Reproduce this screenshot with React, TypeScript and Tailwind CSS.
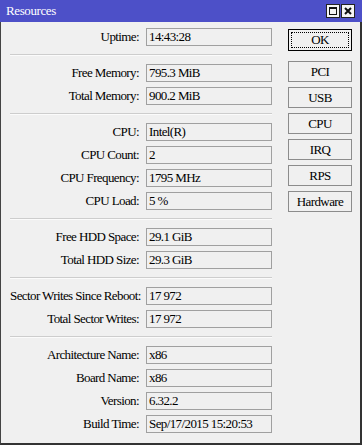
import { ReactNode } from 'react';

type Row = { label: string; value: string };

const groups: Row[][] = [
  [{ label: 'Uptime:', value: '14:43:28' }],
  [
    { label: 'Free Memory:', value: '795.3 MiB' },
    { label: 'Total Memory:', value: '900.2 MiB' },
  ],
  [
    { label: 'CPU:', value: 'Intel(R)' },
    { label: 'CPU Count:', value: '2' },
    { label: 'CPU Frequency:', value: '1795 MHz' },
    { label: 'CPU Load:', value: '5 %' },
  ],
  [
    { label: 'Free HDD Space:', value: '29.1 GiB' },
    { label: 'Total HDD Size:', value: '29.3 GiB' },
  ],
  [
    { label: 'Sector Writes Since Reboot:', value: '17 972' },
    { label: 'Total Sector Writes:', value: '17 972' },
  ],
  [
    { label: 'Architecture Name:', value: 'x86' },
    { label: 'Board Name:', value: 'x86' },
    { label: 'Version:', value: '6.32.2' },
    { label: 'Build Time:', value: 'Sep/17/2015 15:20:53' },
  ],
];

const buttons = ['PCI', 'USB', 'CPU', 'IRQ', 'RPS', 'Hardware'];

const Field = ({ label, value }: Row) => (
  <div className="flex h-[18px] items-center">
    <span className="w-[129px] whitespace-nowrap text-right">{label}</span>
    <div className="ml-[7px] flex h-[18px] w-[126px] items-center border border-[#a0a0a0] bg-[#f0f0f0] pl-[2px]">
      {value}
    </div>
  </div>
);

const Btn = ({ children }: { children: ReactNode }) => (
  <button className="flex h-[21px] w-[64px] items-center justify-center border border-[#8c8c8c] bg-[#f0f0f0] leading-none">
    {children}
  </button>
);

const TitleButton = ({ children }: { children: ReactNode }) => (
  <div className="flex h-[14px] w-[14px] items-center justify-center border border-[#222] bg-[#f4f4f4]">
    {children}
  </div>
);

const App = () => {
  return (
    <div className="flex h-[445px] w-[362px] flex-col bg-[#f0f0f0] font-['Liberation_Serif',serif] text-[13px] tracking-[-0.6px] text-black">
      {/* title bar */}
      <div className="flex h-[22px] items-center justify-between bg-[#4d50c8] pl-[6px] pr-[7px]">
        <span className="text-[13px] tracking-[-0.4px] text-white">Resources</span>
        <div className="flex gap-[1px]">
          <TitleButton>
            <svg width="10" height="10" viewBox="0 0 10 10">
              <rect x="1.5" y="1.5" width="7" height="7" fill="none" stroke="#111" strokeWidth="1" />
              <rect x="1" y="1" width="8" height="2" fill="#111" />
            </svg>
          </TitleButton>
          <TitleButton>
            <svg width="10" height="10" viewBox="0 0 10 10">
              <path d="M2 2 L8 8 M8 2 L2 8" stroke="#111" strokeWidth="2" />
            </svg>
          </TitleButton>
        </div>
      </div>

      <div className="flex flex-1 border-b-2 border-l border-r-2 border-b-[#333] border-l-[#444] border-r-[#333]">
        <div className="flex flex-col pl-[9px] pt-[6px]">
          {groups.map((group, gi) => (
            <div key={gi} className="flex flex-col">
              {gi > 0 && (
                <div className="my-[8px] h-[2px] w-[262px] border-t border-b border-t-[#cdcdcd] border-b-[#fbfbfb]" />
              )}
              <div className="flex flex-col gap-[5px]">
                {group.map((row) => (
                  <Field key={row.label} {...row} />
                ))}
              </div>
            </div>
          ))}
        </div>

        <div className="ml-[16px] flex flex-col pt-[7px]">
          <button className="flex h-[22px] w-[64px] items-center justify-center border border-black bg-[#f0f0f0] p-[2px]">
            <span className="flex h-full w-full items-center justify-center border border-dotted border-black">
              OK
            </span>
          </button>
          <div className="mt-[10px] flex flex-col gap-[5px]">
            {buttons.map((b) => (
              <Btn key={b}>{b}</Btn>
            ))}
          </div>
        </div>
      </div>
    </div>
  );
};

export default App;
